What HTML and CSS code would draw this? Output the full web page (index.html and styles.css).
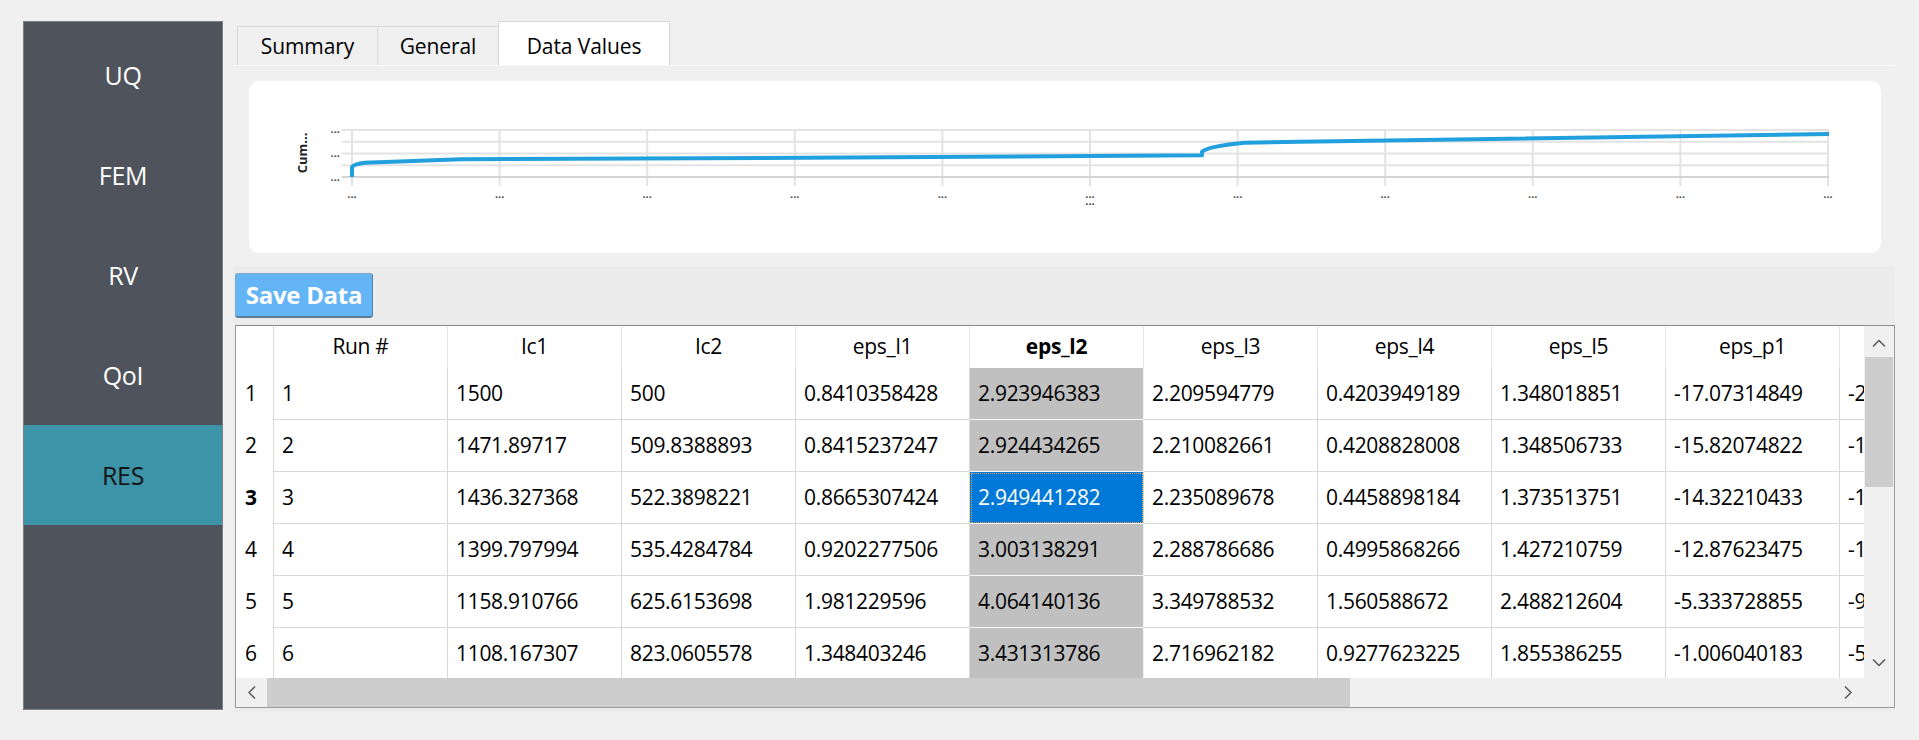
FILE: index.html
```html
<!DOCTYPE html>
<html lang="en">
<head>
<meta charset="utf-8">
<title>RES - Data Values</title>
<link rel="stylesheet" href="styles.css">
</head>
<body>
<div class="app">
  <nav class="sidebar">
    <div class="nav-item">UQ</div>
    <div class="nav-item">FEM</div>
    <div class="nav-item">RV</div>
    <div class="nav-item">QoI</div>
    <div class="nav-item active">RES</div>
  </nav>
  <main class="main">
    <div class="tabs">
      <div class="tab tab-summary">Summary</div>
      <div class="tab tab-general">General</div>
      <div class="tab tab-data active">Data Values</div>
    </div>
    <section class="pane">
      <div class="chart-wrap">
        <div class="chart-card">
          <svg class="chart" width="1632" height="172" viewBox="0 0 1632 172">
            <g class="grid-v">
              <line x1="103" y1="49" x2="103" y2="105"/>
              <line x1="250.6" y1="49" x2="250.6" y2="105"/>
              <line x1="398.2" y1="49" x2="398.2" y2="105"/>
              <line x1="545.8" y1="49" x2="545.8" y2="105"/>
              <line x1="693.4" y1="49" x2="693.4" y2="105"/>
              <line x1="841" y1="49" x2="841" y2="105"/>
              <line x1="988.6" y1="49" x2="988.6" y2="105"/>
              <line x1="1136.2" y1="49" x2="1136.2" y2="105"/>
              <line x1="1283.8" y1="49" x2="1283.8" y2="105"/>
              <line x1="1431.4" y1="49" x2="1431.4" y2="105"/>
              <line x1="1579" y1="49" x2="1579" y2="105"/>
            </g>
            <g class="grid-h">
              <line x1="93" y1="49" x2="1580" y2="49"/>
              <line x1="93" y1="60.75" x2="1580" y2="60.75"/>
              <line x1="93" y1="72.5" x2="1580" y2="72.5"/>
              <line x1="93" y1="84.25" x2="1580" y2="84.25"/>
            </g>
            <line class="axis" x1="93" y1="96" x2="1580" y2="96"/>
            <path class="curve" d="M103,96 L103,86 Q105,83 116,81.7 L212,78.3 L451,77.3 L953,74.3 L953,71 Q957,65.5 995.6,61.7 L1051,60.7 L1580,53"/>
            <g class="ylab">
              <text x="91" y="52">...</text>
              <text x="91" y="76">...</text>
              <text x="91" y="100">...</text>
            </g>
            <g class="xlab">
              <text x="103" y="117">...</text>
              <text x="250.6" y="117">...</text>
              <text x="398.2" y="117">...</text>
              <text x="545.8" y="117">...</text>
              <text x="693.4" y="117">...</text>
              <text x="841" y="117">...</text>
              <text x="988.6" y="117">...</text>
              <text x="1136.2" y="117">...</text>
              <text x="1283.8" y="117">...</text>
              <text x="1431.4" y="117">...</text>
              <text x="1579" y="117">...</text>
            </g>
            <text class="xtitle" x="841" y="124">...</text>
            <text class="ytitle" transform="translate(53 72) rotate(-90)">Cum...</text>
          </svg>
        </div>
      </div>
      <div class="lower">
        <button class="save-btn" type="button">Save Data</button>
        <div class="grid">
          <div class="cells">
            <div class="rows">
              <div class="row head">
                <div class="c rh"></div>
                <div class="c">Run #</div>
                <div class="c">Ic1</div>
                <div class="c">Ic2</div>
                <div class="c">eps_l1</div>
                <div class="c sel-head">eps_l2</div>
                <div class="c">eps_l3</div>
                <div class="c">eps_l4</div>
                <div class="c">eps_l5</div>
                <div class="c">eps_p1</div>
                <div class="c"></div>
              </div>
              <div class="row">
                <div class="c rh">1</div>
                <div class="c">1</div>
                <div class="c">1500</div>
                <div class="c">500</div>
                <div class="c">0.8410358428</div>
                <div class="c sel">2.923946383</div>
                <div class="c">2.209594779</div>
                <div class="c">0.4203949189</div>
                <div class="c">1.348018851</div>
                <div class="c">-17.07314849</div>
                <div class="c">-20.5614728</div>
              </div>
              <div class="row">
                <div class="c rh">2</div>
                <div class="c">2</div>
                <div class="c">1471.89717</div>
                <div class="c">509.8388893</div>
                <div class="c">0.8415237247</div>
                <div class="c sel">2.924434265</div>
                <div class="c">2.210082661</div>
                <div class="c">0.4208828008</div>
                <div class="c">1.348506733</div>
                <div class="c">-15.82074822</div>
                <div class="c">-19.3090725</div>
              </div>
              <div class="row">
                <div class="c rh cur">3</div>
                <div class="c">3</div>
                <div class="c">1436.327368</div>
                <div class="c">522.3898221</div>
                <div class="c">0.8665307424</div>
                <div class="c focus">2.949441282</div>
                <div class="c">2.235089678</div>
                <div class="c">0.4458898184</div>
                <div class="c">1.373513751</div>
                <div class="c">-14.32210433</div>
                <div class="c">-17.8104286</div>
              </div>
              <div class="row">
                <div class="c rh">4</div>
                <div class="c">4</div>
                <div class="c">1399.797994</div>
                <div class="c">535.4284784</div>
                <div class="c">0.9202277506</div>
                <div class="c sel">3.003138291</div>
                <div class="c">2.288786686</div>
                <div class="c">0.4995868266</div>
                <div class="c">1.427210759</div>
                <div class="c">-12.87623475</div>
                <div class="c">-16.3645590</div>
              </div>
              <div class="row">
                <div class="c rh">5</div>
                <div class="c">5</div>
                <div class="c">1158.910766</div>
                <div class="c">625.6153698</div>
                <div class="c">1.981229596</div>
                <div class="c sel">4.064140136</div>
                <div class="c">3.349788532</div>
                <div class="c">1.560588672</div>
                <div class="c">2.488212604</div>
                <div class="c">-5.333728855</div>
                <div class="c">-9.82187346</div>
              </div>
              <div class="row">
                <div class="c rh">6</div>
                <div class="c">6</div>
                <div class="c">1108.167307</div>
                <div class="c">823.0605578</div>
                <div class="c">1.348403246</div>
                <div class="c sel">3.431313786</div>
                <div class="c">2.716962182</div>
                <div class="c">0.9277623225</div>
                <div class="c">1.855386255</div>
                <div class="c">-1.006040183</div>
                <div class="c">-5.49447518</div>
              </div>
            </div>
          </div>
          <div class="vscroll">
            <div class="sbtn vbtn">
              <svg width="30" height="31" viewBox="0 0 30 31"><polyline class="chev" points="9.5,20 15,14.5 20.5,20"/></svg>
            </div>
            <div class="vtrack"><div class="vthumb"></div></div>
            <div class="sbtn vbtn">
              <svg width="30" height="31" viewBox="0 0 30 31"><polyline class="chev" points="9.5,13 15,18.5 20.5,13"/></svg>
            </div>
          </div>
          <div class="hscroll">
            <div class="sbtn hbtn">
              <svg width="31" height="29" viewBox="0 0 31 29"><polyline class="chev" points="18.5,9 13,14.5 18.5,20"/></svg>
            </div>
            <div class="htrack"><div class="hthumb"></div></div>
            <div class="sbtn hbtn">
              <svg width="31" height="29" viewBox="0 0 31 29"><polyline class="chev" points="12.5,9 18,14.5 12.5,20"/></svg>
            </div>
          </div>
          <div class="corner"></div>
        </div>
      </div>
    </section>
  </main>
</div>
</body>
</html>
```

FILE: styles.css
```css
* { box-sizing: border-box; }

html, body {
  margin: 0;
  padding: 0;
}

body {
  background: #f0f0f0;
  font-family: "Open Sans", "Noto Sans", "Liberation Sans", sans-serif;
  color: #000;
  width: 1919px;
  height: 740px;
  overflow: hidden;
}

.app {
  display: flex;
  align-items: flex-start;
  padding: 21px 0 0 23px;
}

/* ---------- sidebar ---------- */
.sidebar {
  width: 200px;
  height: 689px;
  background: #4f535b;
  border: 1px solid #7c7f86;
  padding-top: 3px;
  display: flex;
  flex-direction: column;
}

.nav-item {
  height: 100px;
  display: flex;
  align-items: center;
  justify-content: center;
  color: #ffffff;
  font-size: 25px;
  letter-spacing: -0.3px;
}

.nav-item.active {
  background: #3d93a7;
  color: #141414;
}

/* ---------- main ---------- */
.main {
  margin-left: 10px;
  width: 1662px;
  display: flex;
  flex-direction: column;
}

.tabs {
  height: 44px;
  display: flex;
  align-items: flex-end;
  padding-left: 4px;
}

.tab {
  height: 39px;
  line-height: 38px;
  text-align: center;
  font-size: 21px;
  letter-spacing: -0.1px;
  background: #f0f0f0;
  border: 1px solid #d9d9d9;
  border-bottom: none;
}

.tab + .tab { margin-left: -1px; }

.tab-summary { width: 141px; }
.tab-general { width: 122px; }
.tab-data { width: 172px; }

.tab.active {
  height: 44px;
  padding-top: 5px;
  background: #ffffff;
}

.pane {
  border-top: 1px solid #f8f8f8;
  display: flex;
  flex-direction: column;
}

.chart-wrap {
  background: #f0f0f0;
  padding: 15px 14px 14px 16px;
}

.chart-card {
  height: 172px;
  background: #ffffff;
  border-radius: 10px;
  overflow: hidden;
}

.chart { display: block; }

.grid-v line {
  stroke: #e3e3e3;
  stroke-width: 2;
}

.grid-h line {
  stroke: #e3e3e3;
  stroke-width: 1.8;
}

.axis {
  stroke: #d4d4d4;
  stroke-width: 2;
}

.curve {
  fill: none;
  stroke: #22a0de;
  stroke-width: 4;
  stroke-linejoin: round;
}

.ylab text,
.xlab text,
.xtitle {
  font-family: "Open Sans", "Noto Sans", sans-serif;
  font-size: 11px;
  font-weight: 700;
  fill: #4a4a4a;
}

.ylab text { text-anchor: end; }
.xlab text,
.xtitle { text-anchor: middle; }
.xtitle { fill: #333; }

.ytitle {
  font-family: "Open Sans", "Noto Sans", sans-serif;
  font-size: 13px;
  font-weight: 700;
  fill: #222;
  text-anchor: middle;
  dominant-baseline: central;
}

/* ---------- lower part ---------- */
.lower {
  background: #ececec;
  padding: 6px 0 4px 2px;
  display: flex;
  flex-direction: column;
  align-items: flex-start;
}

.save-btn {
  width: 138px;
  height: 45px;
  margin: 0 0 7px 0;
  padding: 0;
  background: #64b5f6;
  border: 1px solid #7fa7c4;
  border-right-color: #5b7f9b;
  border-bottom: 2px solid #5b7f9b;
  border-radius: 3px;
  color: #ffffff;
  font-family: "Open Sans", "Noto Sans", "Liberation Sans", sans-serif;
  font-size: 24px;
  font-weight: 700;
  letter-spacing: -0.3px;
  line-height: 40px;
  text-align: center;
}

.grid {
  width: 1660px;
  height: 383px;
  border: 1px solid #9a9a9a;
  border-top-color: #8a8a8a;
  display: grid;
  grid-template-columns: 1628px 30px;
  grid-template-rows: 352px 29px;
  background: #ffffff;
}

.cells {
  overflow: hidden;
  background: #ffffff;
}

.rows {
  width: 1778px;
}

.row {
  display: grid;
  grid-template-columns: 38px repeat(10, 174px);
  height: 52px;
}

.row.head { height: 42px; }

.c {
  font-size: 21px;
  letter-spacing: -0.3px;
  line-height: 50px;
  padding-left: 8px;
  white-space: nowrap;
  overflow: hidden;
  border-right: 1px solid #d8d8d8;
  border-bottom: 1px solid #d8d8d8;
}

.row.head .c {
  line-height: 40px;
  padding-left: 0;
  text-align: center;
  border-right-color: #e6e6e6;
  border-bottom: none;
}

.c.rh {
  padding-left: 9px;
  border-bottom: none;
  border-right-color: #d8d8d8;
}

.row.head .c.rh { border-right-color: #d8d8d8; }

.c.rh.cur,
.c.sel-head { font-weight: 700; }

.c.sel {
  background: #c0c0c0;
  border-bottom-color: #f6f6f6;
  border-right-color: #f2f2f2;
}

.c.focus {
  background: #0078d7;
  color: #ffffff;
  border-bottom-color: #f6f6f6;
  outline: 1px dotted #f0a040;
  outline-offset: -2px;
}

/* ---------- scrollbars ---------- */
.vscroll {
  background: #f0f0f0;
  display: flex;
  flex-direction: column;
}

.sbtn {
  display: flex;
  align-items: center;
  justify-content: center;
}

.sbtn svg { display: block; }

.vbtn { height: 31px; }

.vtrack {
  flex: 1;
  padding: 0 1px;
}

.vthumb {
  height: 130px;
  background: #cdcdcd;
}

.hscroll {
  background: #f0f0f0;
  display: flex;
}

.hbtn { width: 31px; }

.htrack { flex: 1; }

.hthumb {
  width: 1083px;
  height: 29px;
  background: #cdcdcd;
}

.corner { background: #f0f0f0; }

.chev {
  fill: none;
  stroke: #606060;
  stroke-width: 1.7;
  stroke-linecap: round;
  stroke-linejoin: round;
}
```
